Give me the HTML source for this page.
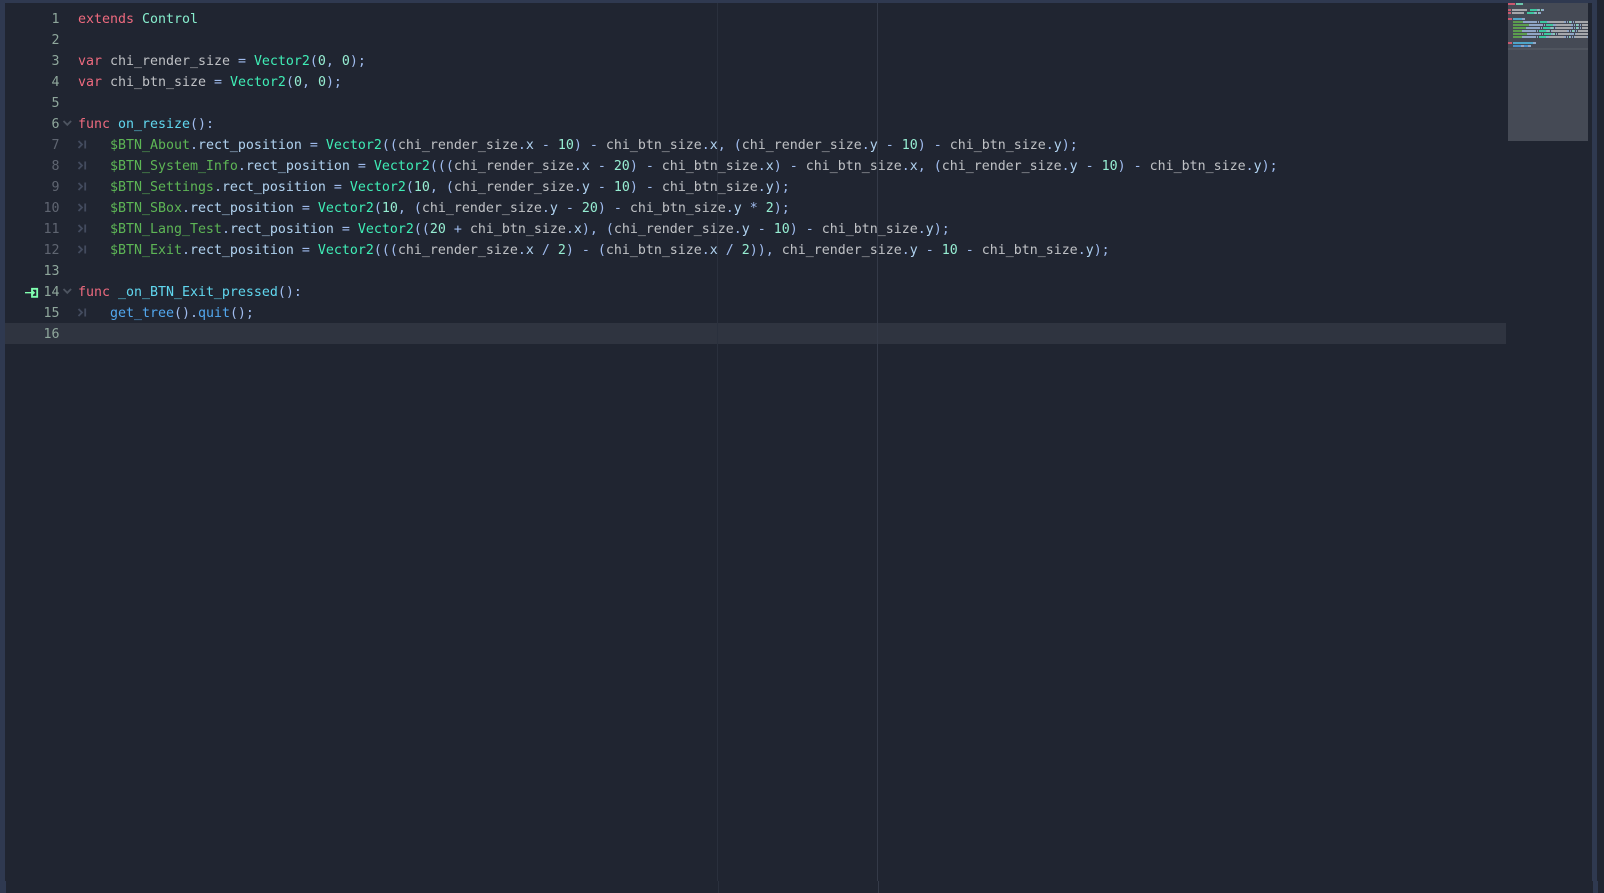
<!DOCTYPE html>
<html><head><meta charset="utf-8"><style>
html,body{margin:0;padding:0;width:1604px;height:893px;overflow:hidden;background:#202531}
.a{position:absolute}
.l{position:absolute;left:78px;height:21px;line-height:23px;white-space:pre;font-family:"DejaVu Sans Mono","Liberation Mono",monospace;font-size:13.295px;color:#cdcfd2;opacity:.92}
.n{position:absolute;left:30px;width:29.5px;height:21px;line-height:23px;text-align:right;font-family:"DejaVu Sans Mono","Liberation Mono",monospace;font-size:13.295px;color:#8fa79c}
.d{color:#5f6571}
.k{color:#ff7085}.c{color:#8fffdb}.b{color:#42ffc2}.s{color:#abc9ff}.i{color:#a1ffe0}.f{color:#66e6ff}.g{color:#57b3ff}.p{color:#63c259}.m{color:#bce0ff}
</style></head><body>
<div class="a" style="left:0;top:0;width:1592px;height:3px;background:#2f3950"></div>
<div class="a" style="left:0;top:3px;width:5px;height:878px;background:#2f3950"></div>
<div class="a" style="left:0;top:881px;width:6px;height:12px;background:#2f3950"></div>
<div class="a" style="left:1592px;top:0;width:5px;height:881px;background:#2f3950"></div>
<div class="a" style="left:1593px;top:881px;width:5px;height:12px;background:#2f3950"></div>
<div class="a" style="left:5px;top:323px;width:1501px;height:21px;background:#2f3440"></div>
<div class="a" style="left:717px;top:3px;width:1px;height:878px;background:#2a303d"></div>
<div class="a" style="left:718px;top:881px;width:1px;height:12px;background:#2a303d"></div>
<div class="a" style="left:877px;top:3px;width:1px;height:878px;background:#343a48"></div>
<div class="a" style="left:878px;top:881px;width:1px;height:12px;background:#343a48"></div>

<div class="n" style="top:8px">1</div>
<div class="n" style="top:29px">2</div>
<div class="n" style="top:50px">3</div>
<div class="n" style="top:71px">4</div>
<div class="n" style="top:92px">5</div>
<div class="n" style="top:113px">6</div>
<div class="n d" style="top:134px">7</div>
<div class="n d" style="top:155px">8</div>
<div class="n d" style="top:176px">9</div>
<div class="n d" style="top:197px">10</div>
<div class="n d" style="top:218px">11</div>
<div class="n d" style="top:239px">12</div>
<div class="n" style="top:260px">13</div>
<div class="n" style="top:281px">14</div>
<div class="n" style="top:302px">15</div>
<div class="n" style="top:323px">16</div>

<div class="l" style="top:8px"><span class="k">extends</span> <span class="c">Control</span></div>
<div class="l" style="top:50px"><span class="k">var</span> chi_render_size <span class="s">=</span> <span class="b">Vector2</span><span class="s">(</span><span class="i">0</span><span class="s">,</span> <span class="i">0</span><span class="s">);</span></div>
<div class="l" style="top:71px"><span class="k">var</span> chi_btn_size <span class="s">=</span> <span class="b">Vector2</span><span class="s">(</span><span class="i">0</span><span class="s">,</span> <span class="i">0</span><span class="s">);</span></div>
<div class="l" style="top:113px"><span class="k">func</span> <span class="f">on_resize</span><span class="s">():</span></div>
<div class="l" style="top:134px">    <span class="p">$BTN_About</span><span class="s">.</span><span class="m">rect_position</span> <span class="s">=</span> <span class="b">Vector2</span><span class="s">((</span>chi_render_size<span class="s">.</span><span class="m">x</span> <span class="s">-</span> <span class="i">10</span><span class="s">)</span> <span class="s">-</span> chi_btn_size<span class="s">.</span><span class="m">x</span><span class="s">,</span> <span class="s">(</span>chi_render_size<span class="s">.</span><span class="m">y</span> <span class="s">-</span> <span class="i">10</span><span class="s">)</span> <span class="s">-</span> chi_btn_size<span class="s">.</span><span class="m">y</span><span class="s">);</span></div>
<div class="l" style="top:155px">    <span class="p">$BTN_System_Info</span><span class="s">.</span><span class="m">rect_position</span> <span class="s">=</span> <span class="b">Vector2</span><span class="s">(((</span>chi_render_size<span class="s">.</span><span class="m">x</span> <span class="s">-</span> <span class="i">20</span><span class="s">)</span> <span class="s">-</span> chi_btn_size<span class="s">.</span><span class="m">x</span><span class="s">)</span> <span class="s">-</span> chi_btn_size<span class="s">.</span><span class="m">x</span><span class="s">,</span> <span class="s">(</span>chi_render_size<span class="s">.</span><span class="m">y</span> <span class="s">-</span> <span class="i">10</span><span class="s">)</span> <span class="s">-</span> chi_btn_size<span class="s">.</span><span class="m">y</span><span class="s">);</span></div>
<div class="l" style="top:176px">    <span class="p">$BTN_Settings</span><span class="s">.</span><span class="m">rect_position</span> <span class="s">=</span> <span class="b">Vector2</span><span class="s">(</span><span class="i">10</span><span class="s">,</span> <span class="s">(</span>chi_render_size<span class="s">.</span><span class="m">y</span> <span class="s">-</span> <span class="i">10</span><span class="s">)</span> <span class="s">-</span> chi_btn_size<span class="s">.</span><span class="m">y</span><span class="s">);</span></div>
<div class="l" style="top:197px">    <span class="p">$BTN_SBox</span><span class="s">.</span><span class="m">rect_position</span> <span class="s">=</span> <span class="b">Vector2</span><span class="s">(</span><span class="i">10</span><span class="s">,</span> <span class="s">(</span>chi_render_size<span class="s">.</span><span class="m">y</span> <span class="s">-</span> <span class="i">20</span><span class="s">)</span> <span class="s">-</span> chi_btn_size<span class="s">.</span><span class="m">y</span> <span class="s">*</span> <span class="i">2</span><span class="s">);</span></div>
<div class="l" style="top:218px">    <span class="p">$BTN_Lang_Test</span><span class="s">.</span><span class="m">rect_position</span> <span class="s">=</span> <span class="b">Vector2</span><span class="s">((</span><span class="i">20</span> <span class="s">+</span> chi_btn_size<span class="s">.</span><span class="m">x</span><span class="s">),</span> <span class="s">(</span>chi_render_size<span class="s">.</span><span class="m">y</span> <span class="s">-</span> <span class="i">10</span><span class="s">)</span> <span class="s">-</span> chi_btn_size<span class="s">.</span><span class="m">y</span><span class="s">);</span></div>
<div class="l" style="top:239px">    <span class="p">$BTN_Exit</span><span class="s">.</span><span class="m">rect_position</span> <span class="s">=</span> <span class="b">Vector2</span><span class="s">(((</span>chi_render_size<span class="s">.</span><span class="m">x</span> <span class="s">/</span> <span class="i">2</span><span class="s">)</span> <span class="s">-</span> <span class="s">(</span>chi_btn_size<span class="s">.</span><span class="m">x</span> <span class="s">/</span> <span class="i">2</span><span class="s">)),</span> chi_render_size<span class="s">.</span><span class="m">y</span> <span class="s">-</span> <span class="i">10</span> <span class="s">-</span> chi_btn_size<span class="s">.</span><span class="m">y</span><span class="s">);</span></div>
<div class="l" style="top:281px"><span class="k">func</span> <span class="f">_on_BTN_Exit_pressed</span><span class="s">():</span></div>
<div class="l" style="top:302px">    <span class="g">get_tree</span><span class="s">().</span><span class="g">quit</span><span class="s">();</span></div>

<svg class="a" style="left:0;top:0" width="100" height="340" fill="none">
<path d="M63.5 121l3.8 3.8 3.8-3.8M63.5 289l3.8 3.8 3.8-3.8" stroke="#4d5460" stroke-width="1.8"/>
<g stroke="#434b5e" stroke-width="1.8">
<path d="M78.5 141l3.5 3.5-3.5 3.5M85.2 140.5v8"/>
<path d="M78.5 162l3.5 3.5-3.5 3.5M85.2 161.5v8"/>
<path d="M78.5 183l3.5 3.5-3.5 3.5M85.2 182.5v8"/>
<path d="M78.5 204l3.5 3.5-3.5 3.5M85.2 203.5v8"/>
<path d="M78.5 225l3.5 3.5-3.5 3.5M85.2 224.5v8"/>
<path d="M78.5 246l3.5 3.5-3.5 3.5M85.2 245.5v8"/>
<path d="M78.5 309l3.5 3.5-3.5 3.5M85.2 308.5v8"/>
</g>
<g stroke="#80ffb0">
<path d="M25 292.7h9M31.5 290.2l2.7 2.5-2.7 2.5" stroke-width="1.4"/>
<path d="M32 288.8h5.2v8h-5.2z" stroke-width="1.8"/>
</g>
</svg>

<svg class="a" style="left:1508px;top:3px" width="80" height="138" shape-rendering="crispEdges">
<rect width="80" height="138" fill="#454a55"/>
<rect y="45" width="80" height="2" fill="#50555f"/>
<g fill="#c9586e"><rect y="0" width="7" height="2"/><rect y="6" width="3" height="2"/><rect y="9" width="3" height="2"/><rect y="15" width="4" height="2"/><rect y="39" width="4" height="2"/></g>
<g fill="#6cc5ac"><rect x="8" y="0" width="7" height="2"/></g>
<g fill="#a5a7ab">
<rect x="4" y="6" width="15" height="2"/><rect x="4" y="9" width="12" height="2"/>
<rect x="41" y="18" width="15" height="2"/><rect x="67" y="18" width="13" height="2"/>
<rect x="48" y="21" width="15" height="2"/><rect x="74" y="21" width="6" height="2"/>
<rect x="48" y="24" width="15" height="2"/><rect x="74" y="24" width="6" height="2"/>
<rect x="44" y="27" width="15" height="2"/><rect x="70" y="27" width="10" height="2"/>
<rect x="50" y="30" width="12" height="2"/><rect x="68" y="30" width="12" height="2"/>
<rect x="41" y="33" width="15" height="2"/><rect x="67" y="33" width="12" height="2"/>
</g>
<g fill="#3ec7a0">
<rect x="22" y="6" width="7" height="2"/><rect x="19" y="9" width="7" height="2"/>
<rect x="32" y="18" width="7" height="2"/><rect x="38" y="21" width="7" height="2"/><rect x="35" y="24" width="7" height="2"/><rect x="31" y="27" width="7" height="2"/><rect x="36" y="30" width="7" height="2"/><rect x="31" y="33" width="7" height="2"/>
</g>
<g fill="#85cbb8">
<rect x="30" y="6" width="1" height="2"/><rect x="33" y="6" width="1" height="2"/><rect x="27" y="9" width="1" height="2"/><rect x="30" y="9" width="1" height="2"/>
<rect x="61" y="18" width="2" height="2"/><rect x="68" y="21" width="2" height="2"/><rect x="43" y="24" width="2" height="2"/><rect x="68" y="24" width="2" height="2"/><rect x="39" y="27" width="2" height="2"/><rect x="64" y="27" width="2" height="2"/><rect x="45" y="30" width="2" height="2"/><rect x="61" y="33" width="1" height="2"/>
</g>
<g fill="#8fa5c6">
<rect x="29" y="6" width="1" height="2"/><rect x="31" y="6" width="1" height="2"/><rect x="34" y="6" width="2" height="2"/><rect x="26" y="9" width="1" height="2"/><rect x="28" y="9" width="1" height="2"/><rect x="31" y="9" width="2" height="2"/>
<rect x="14" y="15" width="3" height="2"/>
<rect x="15" y="18" width="14" height="2"/><rect x="30" y="18" width="1" height="2"/><rect x="39" y="18" width="2" height="2"/><rect x="56" y="18" width="2" height="2"/><rect x="59" y="18" width="1" height="2"/><rect x="63" y="18" width="1" height="2"/><rect x="65" y="18" width="1" height="2"/>
<rect x="21" y="21" width="14" height="2"/><rect x="36" y="21" width="1" height="2"/><rect x="45" y="21" width="3" height="2"/><rect x="63" y="21" width="2" height="2"/><rect x="66" y="21" width="1" height="2"/><rect x="70" y="21" width="1" height="2"/><rect x="72" y="21" width="1" height="2"/>
<rect x="18" y="24" width="14" height="2"/><rect x="33" y="24" width="1" height="2"/><rect x="42" y="24" width="1" height="2"/><rect x="45" y="24" width="1" height="2"/><rect x="47" y="24" width="1" height="2"/><rect x="63" y="24" width="2" height="2"/><rect x="66" y="24" width="1" height="2"/><rect x="70" y="24" width="1" height="2"/><rect x="72" y="24" width="1" height="2"/>
<rect x="14" y="27" width="14" height="2"/><rect x="29" y="27" width="1" height="2"/><rect x="38" y="27" width="1" height="2"/><rect x="41" y="27" width="1" height="2"/><rect x="43" y="27" width="1" height="2"/><rect x="59" y="27" width="2" height="2"/><rect x="62" y="27" width="1" height="2"/><rect x="66" y="27" width="1" height="2"/><rect x="68" y="27" width="1" height="2"/>
<rect x="19" y="30" width="14" height="2"/><rect x="34" y="30" width="1" height="2"/><rect x="43" y="30" width="2" height="2"/><rect x="48" y="30" width="1" height="2"/><rect x="62" y="30" width="4" height="2"/><rect x="67" y="30" width="1" height="2"/>
<rect x="14" y="33" width="14" height="2"/><rect x="29" y="33" width="1" height="2"/><rect x="38" y="33" width="3" height="2"/><rect x="56" y="33" width="2" height="2"/><rect x="59" y="33" width="1" height="2"/><rect x="62" y="33" width="1" height="2"/><rect x="64" y="33" width="1" height="2"/><rect x="66" y="33" width="1" height="2"/><rect x="79" y="33" width="1" height="2"/>
<rect x="13" y="42" width="3" height="2"/><rect x="20" y="42" width="3" height="2"/>
</g>
<g fill="#5c9e4e">
<rect x="5" y="18" width="10" height="2"/><rect x="5" y="21" width="16" height="2"/><rect x="5" y="24" width="13" height="2"/><rect x="5" y="27" width="9" height="2"/><rect x="5" y="30" width="14" height="2"/><rect x="5" y="33" width="9" height="2"/>
</g>
<g fill="#4fa5c8"><rect x="5" y="15" width="9" height="2"/><rect x="5" y="39" width="20" height="2"/><rect x="25" y="39" width="3" height="2" fill="#8fa5c6"/></g>
<g fill="#4a8fc9"><rect x="5" y="42" width="8" height="2"/><rect x="16" y="42" width="4" height="2"/></g>
</svg>
</body></html>
